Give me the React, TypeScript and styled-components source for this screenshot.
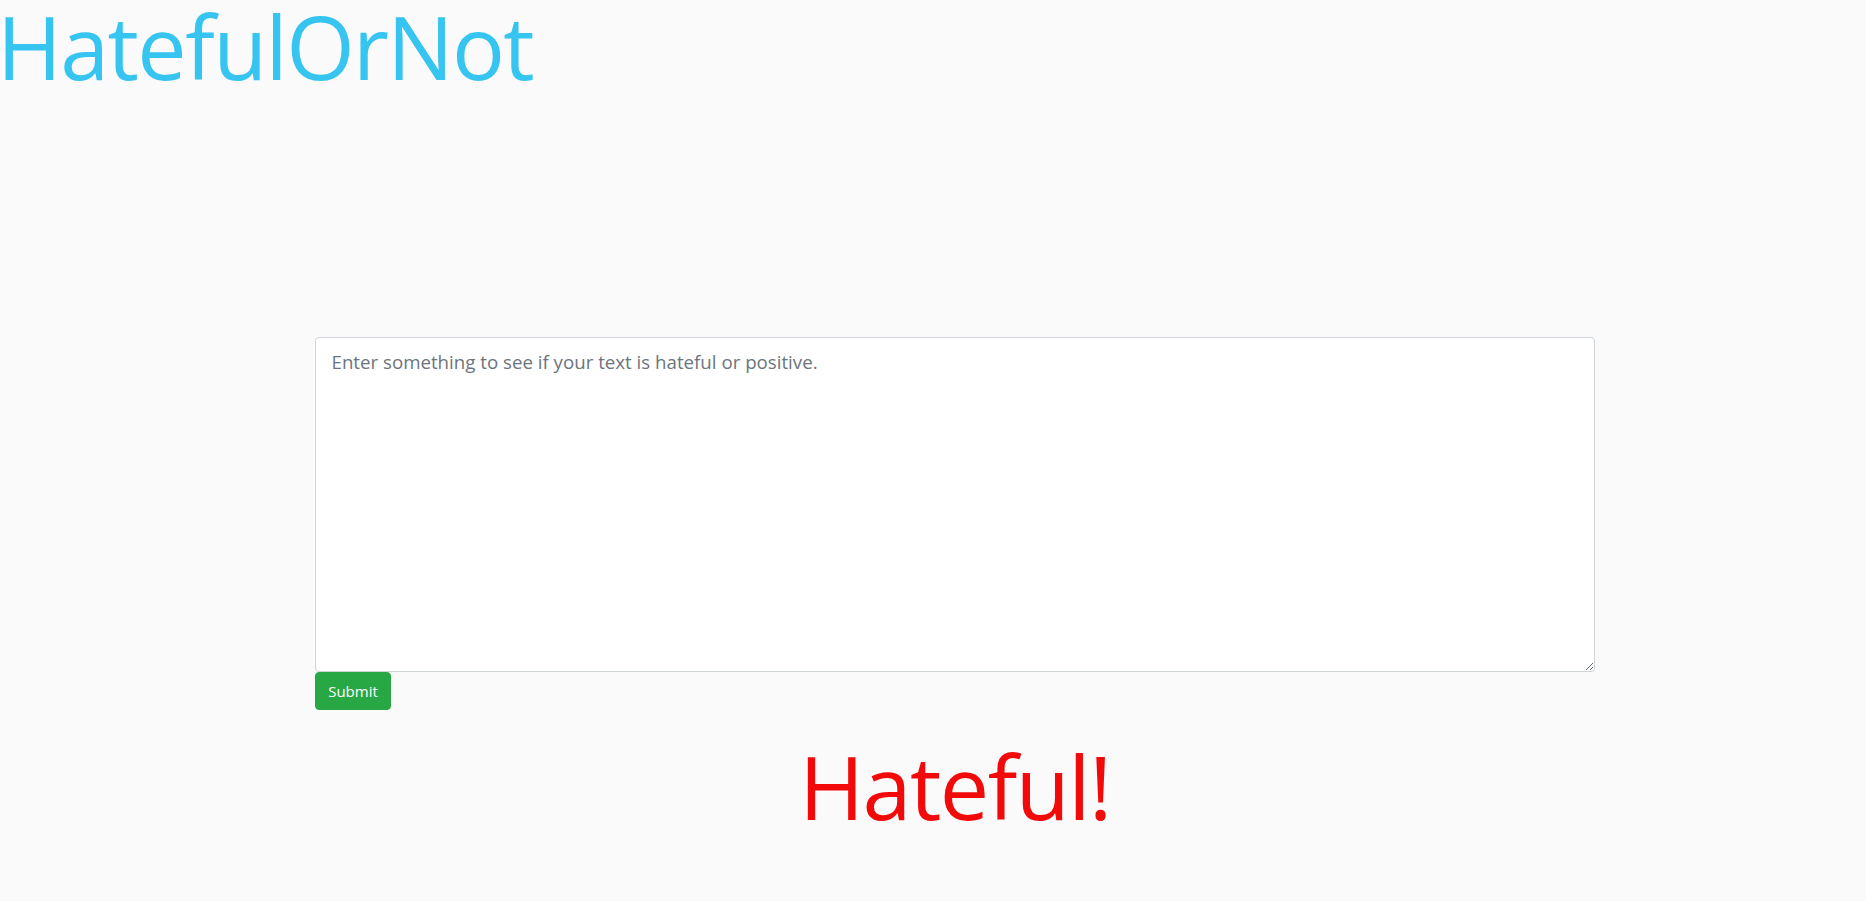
import React from "react";
import styled, { createGlobalStyle } from "styled-components";

const GlobalStyle = createGlobalStyle`
  html, body {
    margin: 0;
    padding: 0;
    background: #fafafa;
    font-family: "Open Sans", "Noto Sans", sans-serif;
  }
  * { box-sizing: border-box; }
`;

const Page = styled.div`
  min-height: 901px;
  background: #fafafa;
`;

const Title = styled.h1`
  margin: 0 0 0 -3px;
  font-family: "Open Sans", sans-serif;
  font-weight: 400;
  font-size: 88px;
  line-height: 93px;
  letter-spacing: -1.6px;
  color: #36c5f0;
`;

const Main = styled.main`
  margin: 244px 0 0 315px;
  width: 1280px;
  display: flex;
  flex-direction: column;
  align-items: flex-start;
`;

const TextArea = styled.textarea`
  display: block;
  width: 100%;
  height: 335px;
  margin: 0;
  padding: 10px 16px 8px 15.5px;
  font-family: "Open Sans", sans-serif;
  font-size: 18.7px;
  line-height: 27px;
  color: #495057;
  background: #fff;
  border: 1px solid #ced4da;
  border-radius: 4px;
  outline: none;
  resize: vertical;
  &::placeholder {
    color: #6c757d;
    opacity: 1;
  }
`;

const SubmitButton = styled.button`
  margin: 0;
  width: 76px;
  height: 38px;
  padding: 0;
  font-family: "Open Sans", sans-serif;
  font-size: 15px;
  color: #fff;
  background: #28a745;
  border: 1px solid #28a745;
  border-radius: 4px;
  cursor: pointer;
`;

const Result = styled.div<{ $hateful: boolean }>`
  align-self: stretch;
  margin-top: 30px;
  text-align: center;
  font-family: "Open Sans", sans-serif;
  font-size: 88px;
  line-height: 93px;
  letter-spacing: -1.5px;
  color: ${(p) => (p.$hateful ? "#f20a0a" : "#28a745")};
`;

export default function App() {
  const [text, setText] = React.useState("");
  return (
    <Page>
      <GlobalStyle />
      <Title>HatefulOrNot</Title>
      <Main>
        <TextArea
          value={text}
          onChange={(e) => setText(e.target.value)}
          placeholder="Enter something to see if your text is hateful or positive."
        />
        <SubmitButton type="button">Submit</SubmitButton>
        <Result $hateful={true}>Hateful!</Result>
      </Main>
    </Page>
  );
}
